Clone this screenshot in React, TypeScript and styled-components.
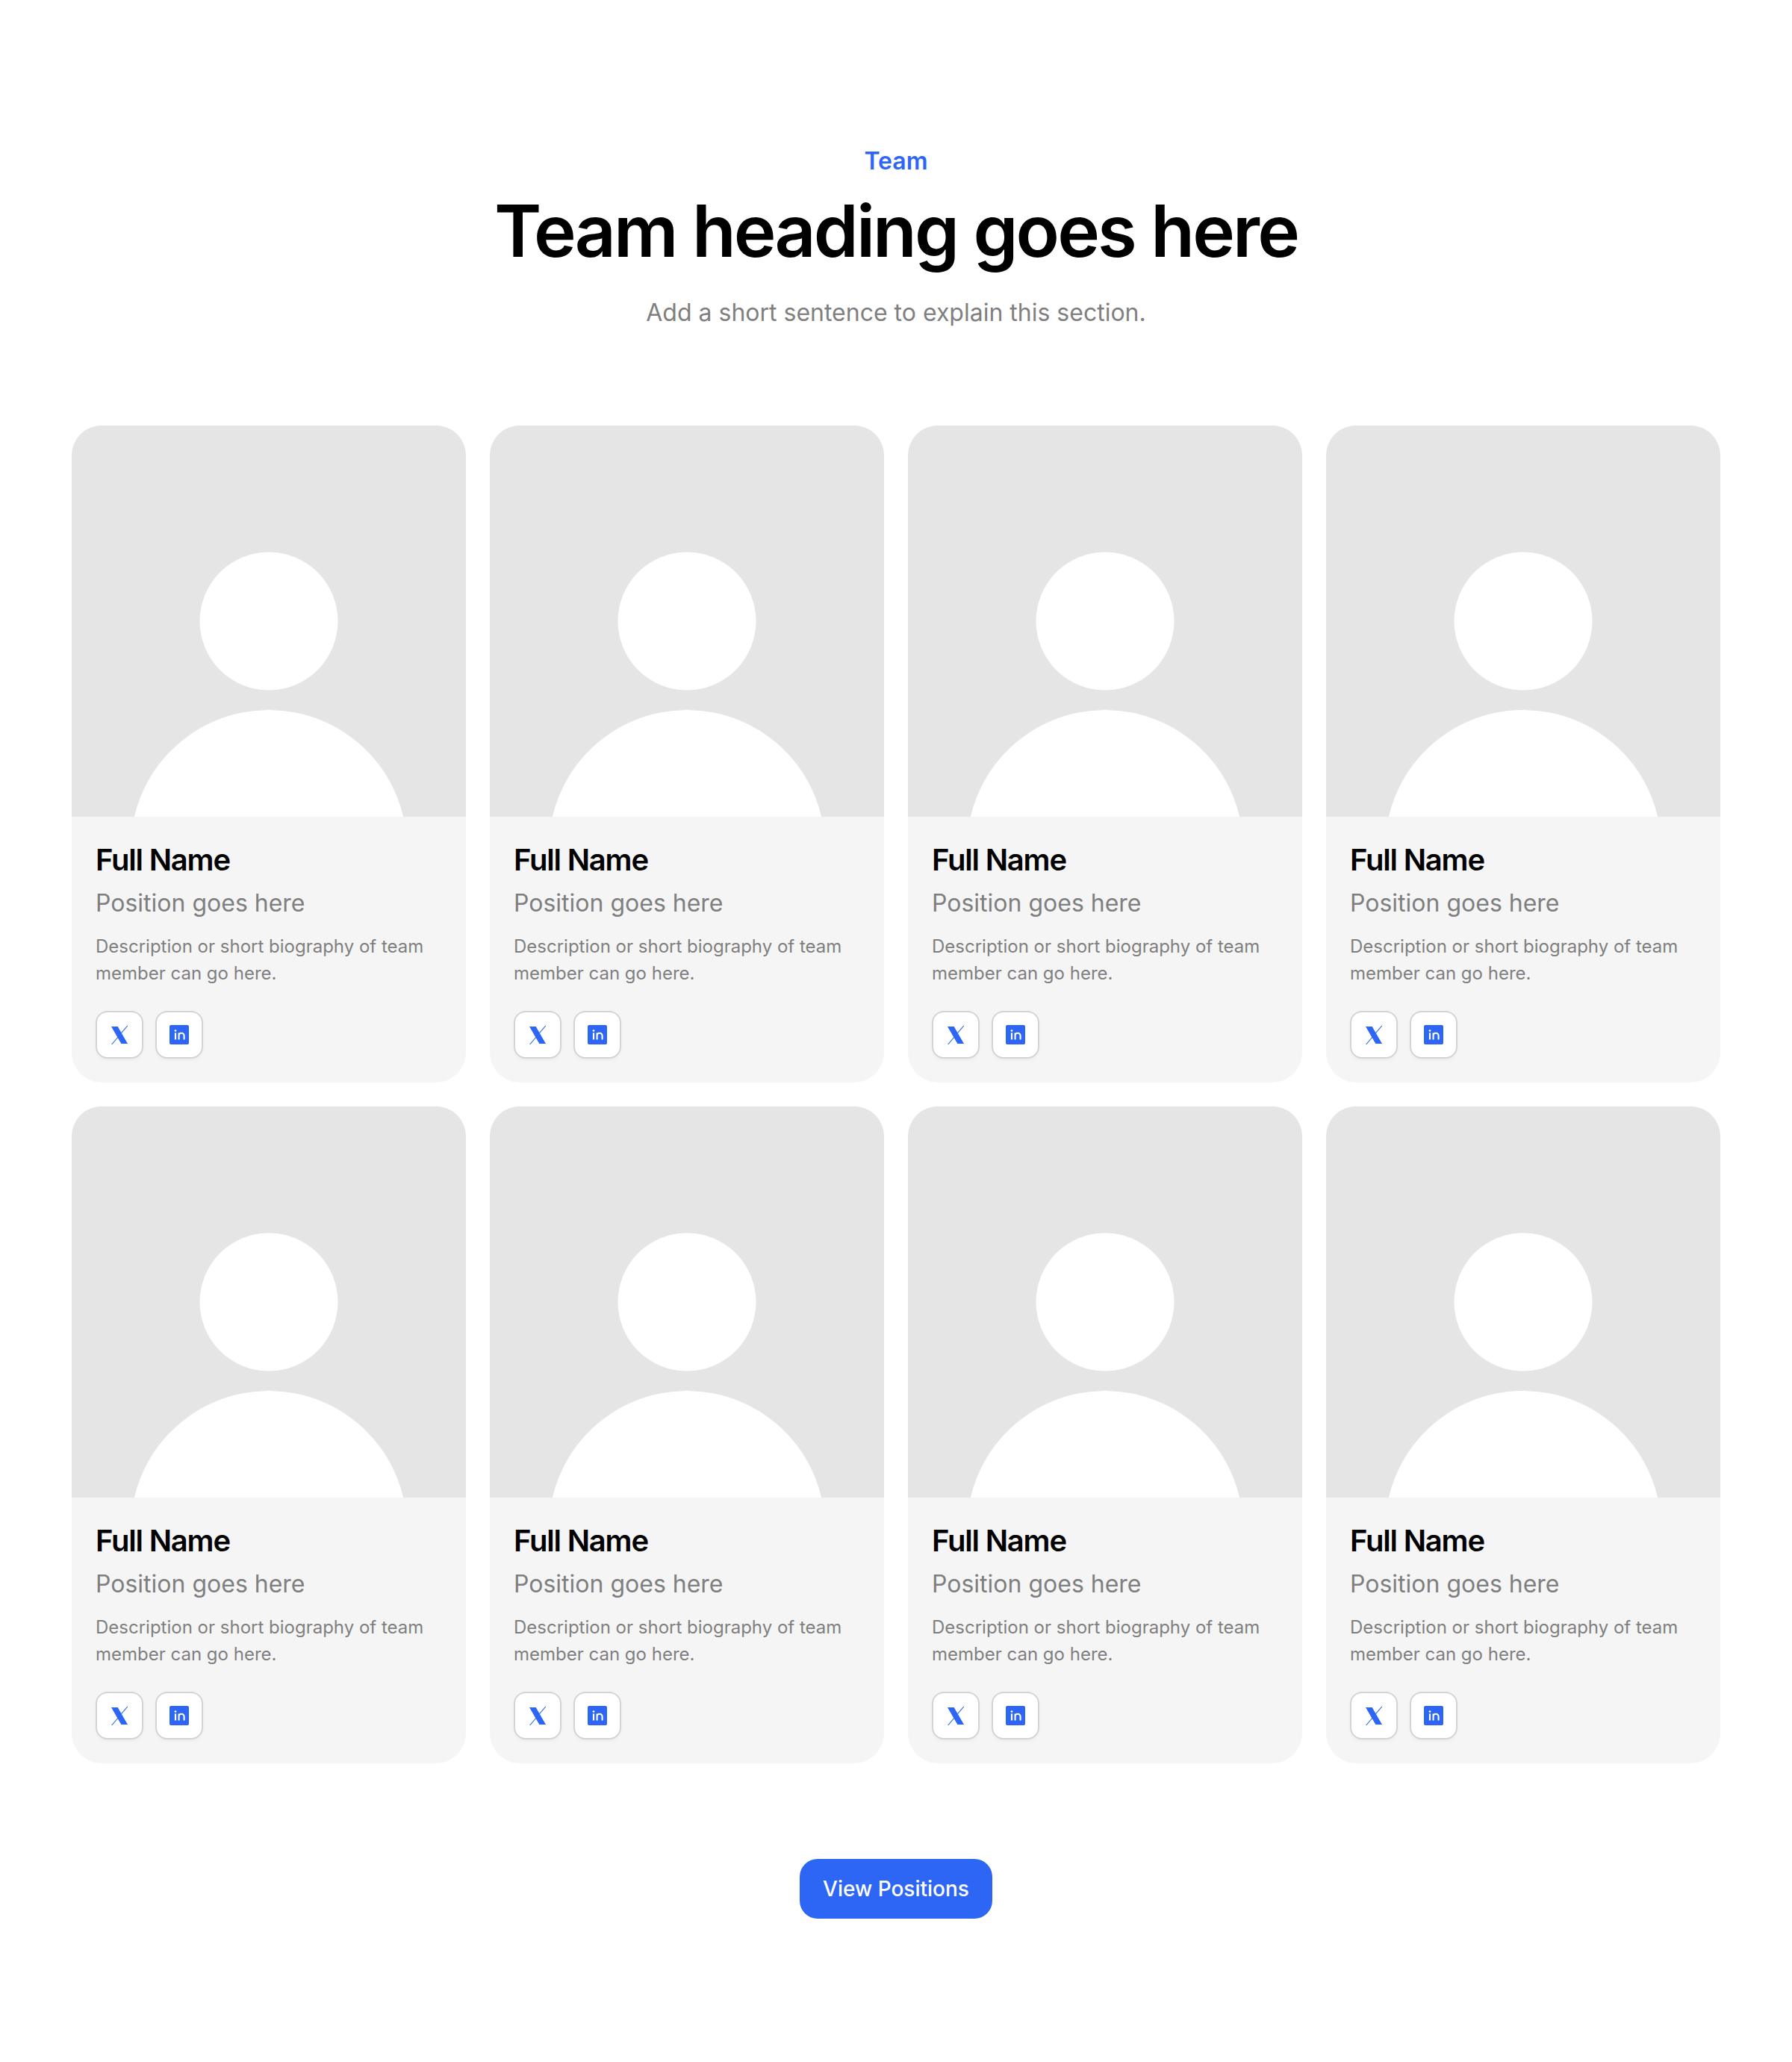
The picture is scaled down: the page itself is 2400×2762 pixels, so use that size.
import styled, { createGlobalStyle } from "styled-components";

const GlobalStyle = createGlobalStyle`
  * {
    box-sizing: border-box;
  }

  html,
  body {
    margin: 0;
    background: #fff;
    font-family: Inter, "Liberation Sans", sans-serif;
  }
`;

const Section = styled.section`
  display: flex;
  flex-direction: column;
  align-items: center;
  width: 2400px;
  height: 2762px;
  padding: 192px 96px 0;
`;

const Header = styled.header`
  display: flex;
  flex-direction: column;
  align-items: center;
  margin-bottom: 127px;
`;

const Tagline = styled.p`
  margin: 0 0 12px;
  color: #2d66f5;
  font-size: 32px;
  line-height: 48px;
  font-weight: 600;
`;

const Heading = styled.h1`
  margin: 0 0 28px;
  color: #000;
  font-size: 96px;
  line-height: 115px;
  font-weight: 600;
  letter-spacing: -0.03em;
`;

const Lead = styled.p`
  margin: 0;
  color: #7f7f7f;
  font-size: 32px;
  line-height: 48px;
`;

const Grid = styled.div`
  display: grid;
  grid-template-columns: repeat(4, 528px);
  gap: 32px;
`;

const Card = styled.article`
  display: flex;
  flex-direction: column;
  height: 880px;
  border-radius: 40px;
  background: #f5f5f5;
  overflow: hidden;
`;

const Photo = styled.svg`
  display: block;
  width: 528px;
  height: 524px;
  flex-shrink: 0;
`;

const Body = styled.div`
  display: flex;
  flex-direction: column;
  flex: 1;
  padding: 32px;
`;

const Name = styled.h2`
  margin: 0;
  color: #000;
  font-size: 40px;
  line-height: 52px;
  font-weight: 600;
  letter-spacing: -0.03em;
`;

const Position = styled.p`
  margin: 8px 0 0;
  color: #7f7f7f;
  font-size: 32px;
  line-height: 48px;
`;

const Bio = styled.p`
  margin: 16px 0 0;
  color: #7f7f7f;
  font-size: 24px;
  line-height: 36px;
`;

const Socials = styled.div`
  display: flex;
  gap: 16px;
  margin-top: auto;
`;

const SocialLink = styled.a`
  display: flex;
  align-items: center;
  justify-content: center;
  width: 64px;
  height: 64px;
  border: 2px solid #d4d4d4;
  border-radius: 16px;
  background: #fff;
  box-shadow: 0 2px 4px rgba(0, 0, 0, 0.04);
`;

const ViewButton = styled.a`
  display: flex;
  align-items: center;
  justify-content: center;
  width: 258px;
  height: 80px;
  margin-top: 128px;
  border-radius: 24px;
  background: #2d66f5;
  color: #fff;
  font-size: 28px;
  font-weight: 500;
`;

const XIcon = () => (
  <svg width="22" height="25" viewBox="0 0 66 75" fill="#2d66f5">
    <path d="M0 3h26l40 69H40z" />
    <path d="M63 0h4L4 75H0z" />
  </svg>
);

const LinkedInIcon = () => (
  <svg width="26" height="26" viewBox="0 0 26 26">
    <rect width="26" height="26" rx="2" fill="#2d66f5" />
    <circle cx="8" cy="7.6" r="1.4" fill="#fff" />
    <rect x="6.9" y="10.4" width="2.2" height="9" fill="#fff" />
    <path
      d="M12.6 19.4v-9M12.6 14.6c0-5 7-5.2 7 0v4.8"
      fill="none"
      stroke="#fff"
      strokeWidth="2.1"
    />
  </svg>
);

const TeamCard = () => (
  <Card>
    <Photo viewBox="0 0 528 524">
      <rect width="528" height="524" fill="#e5e5e5" />
      <circle cx="264" cy="262" r="92.5" fill="#fff" />
      <circle cx="264" cy="566" r="185" fill="#fff" />
    </Photo>
    <Body>
      <Name>Full Name</Name>
      <Position>Position goes here</Position>
      <Bio>Description or short biography of team member can go here.</Bio>
      <Socials>
        <SocialLink>
          <XIcon />
        </SocialLink>
        <SocialLink>
          <LinkedInIcon />
        </SocialLink>
      </Socials>
    </Body>
  </Card>
);

const App = () => {
  const members = Array.from({ length: 8 }, (_, i) => i);

  return (
    <>
      <GlobalStyle />
      <Section>
        <Header>
          <Tagline>Team</Tagline>
          <Heading>Team heading goes here</Heading>
          <Lead>Add a short sentence to explain this section.</Lead>
        </Header>
        <Grid>
          {members.map((id) => (
            <TeamCard key={id} />
          ))}
        </Grid>
        <ViewButton>View Positions</ViewButton>
      </Section>
    </>
  );
};

export default App;
